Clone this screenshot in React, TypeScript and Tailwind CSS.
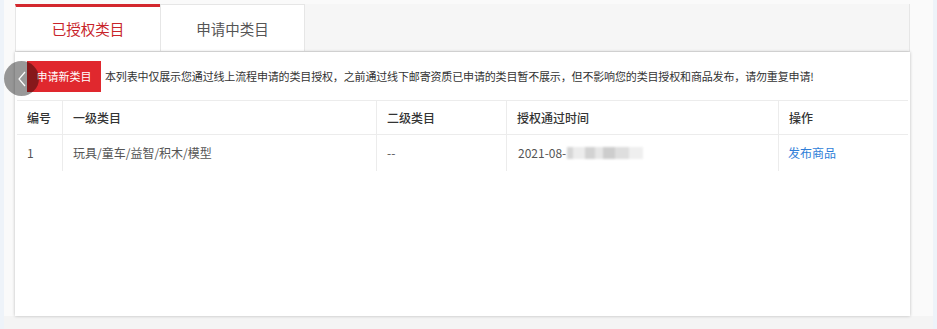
const font = "font-['Microsoft_YaHei','Noto_Sans_CJK_SC',sans-serif]"

const columns = ["编号", "一级类目", "二级类目", "授权通过时间", "操作"]

function BlurredDate() {
  return (
    <span className="ml-[1px] inline-flex h-[13px] items-center blur-[1.2px]">
      <span className="h-[12px] w-[6px] bg-[#d6d6d6]" />
      <span className="h-[12px] w-[12px] bg-[#ececec]" />
      <span className="h-[12px] w-[10px] bg-[#d2d2d2]" />
      <span className="h-[12px] w-[8px] bg-[#e6e6e6]" />
      <span className="h-[12px] w-[12px] bg-[#cdcdcd]" />
      <span className="h-[12px] w-[14px] bg-[#dedede]" />
      <span className="h-[12px] w-[14px] bg-[#efefef]" />
    </span>
  )
}

export default function App() {
  return (
    <div className={`h-[329px] w-full bg-[#eef3f9] px-[4px] ${font}`}>
      <div className="flex h-full flex-col bg-[#f4f4f4]">
        <div className="h-[316px] bg-[#fafafa] pl-[11px] pr-[23px] pt-[4px]">
          <div className="relative flex h-full flex-col">
            {/* tabs */}
            <div className="flex h-[48px] border-b border-r border-[#e6e6e6] bg-[#f6f6f6]">
              <div className="flex w-[145px] items-center justify-center border-l border-t-[3px] border-[#e6e6e6] border-t-[#d3272d] bg-white pb-[1px] text-[14.5px] text-[#c8242a]">
                已授权类目
              </div>
              <div className="flex w-[145px] items-center justify-center border-x border-t border-[#e6e6e6] bg-white pt-[2px] text-[14.5px] text-[#555]">
                申请中类目
              </div>
            </div>

            {/* content */}
            <div className="flex-1 bg-white shadow-[0_0_3px_rgba(0,0,0,0.25)]">
              <div className="flex items-center gap-[4px] pl-[12px] pt-[9px]">
                <button className="h-[31px] w-[74px] bg-[#e0282e] text-[11px] text-white">
                  申请新类目
                </button>
                <p className="text-[11px] tracking-[-0.15px] text-[#333]">
                  本列表中仅展示您通过线上流程申请的类目授权，之前通过线下邮寄资质已申请的类目暂不展示，但不影响您的类目授权和商品发布，请勿重复申请!
                </p>
              </div>

              <div className="mx-[2px] mt-[8px] grid grid-cols-[45px_314px_130px_272px_1fr] text-[12px]">
                {columns.map((c, i) => (
                  <div
                    key={c}
                    className={`flex h-[35px] items-center border-y border-[#ececec] pl-[10px] font-medium text-[#333] ${
                      i > 0 ? "border-l" : ""
                    }`}
                  >
                    {c}
                  </div>
                ))}
                <div className="flex h-[36px] items-center pl-[10px] text-[#555]">1</div>
                <div className="flex h-[36px] items-center border-l border-[#ececec] pl-[10px] text-[#555]">
                  玩具/童车/益智/积木/模型
                </div>
                <div className="flex h-[36px] items-center border-l border-[#ececec] pl-[10px] text-[#555]">
                  --
                </div>
                <div className="flex h-[36px] items-center border-l border-[#ececec] pl-[11px] text-[#555]">
                  2021-08-
                  <BlurredDate />
                </div>
                <div className="flex h-[36px] items-center border-l border-[#ececec] pl-[9px] text-[#2f7ed8]">
                  发布商品
                </div>
              </div>
            </div>

            {/* slider back arrow */}
            <div className="absolute left-[-11px] top-[57px] flex h-[35px] w-[35px] items-center justify-center rounded-full bg-black/40">
              <svg width="10" height="16" viewBox="0 0 10 16" fill="none">
                <path d="M8 1 L2 8 L8 15" stroke="white" strokeWidth="1.2" />
              </svg>
            </div>
          </div>
        </div>
      </div>
    </div>
  )
}
